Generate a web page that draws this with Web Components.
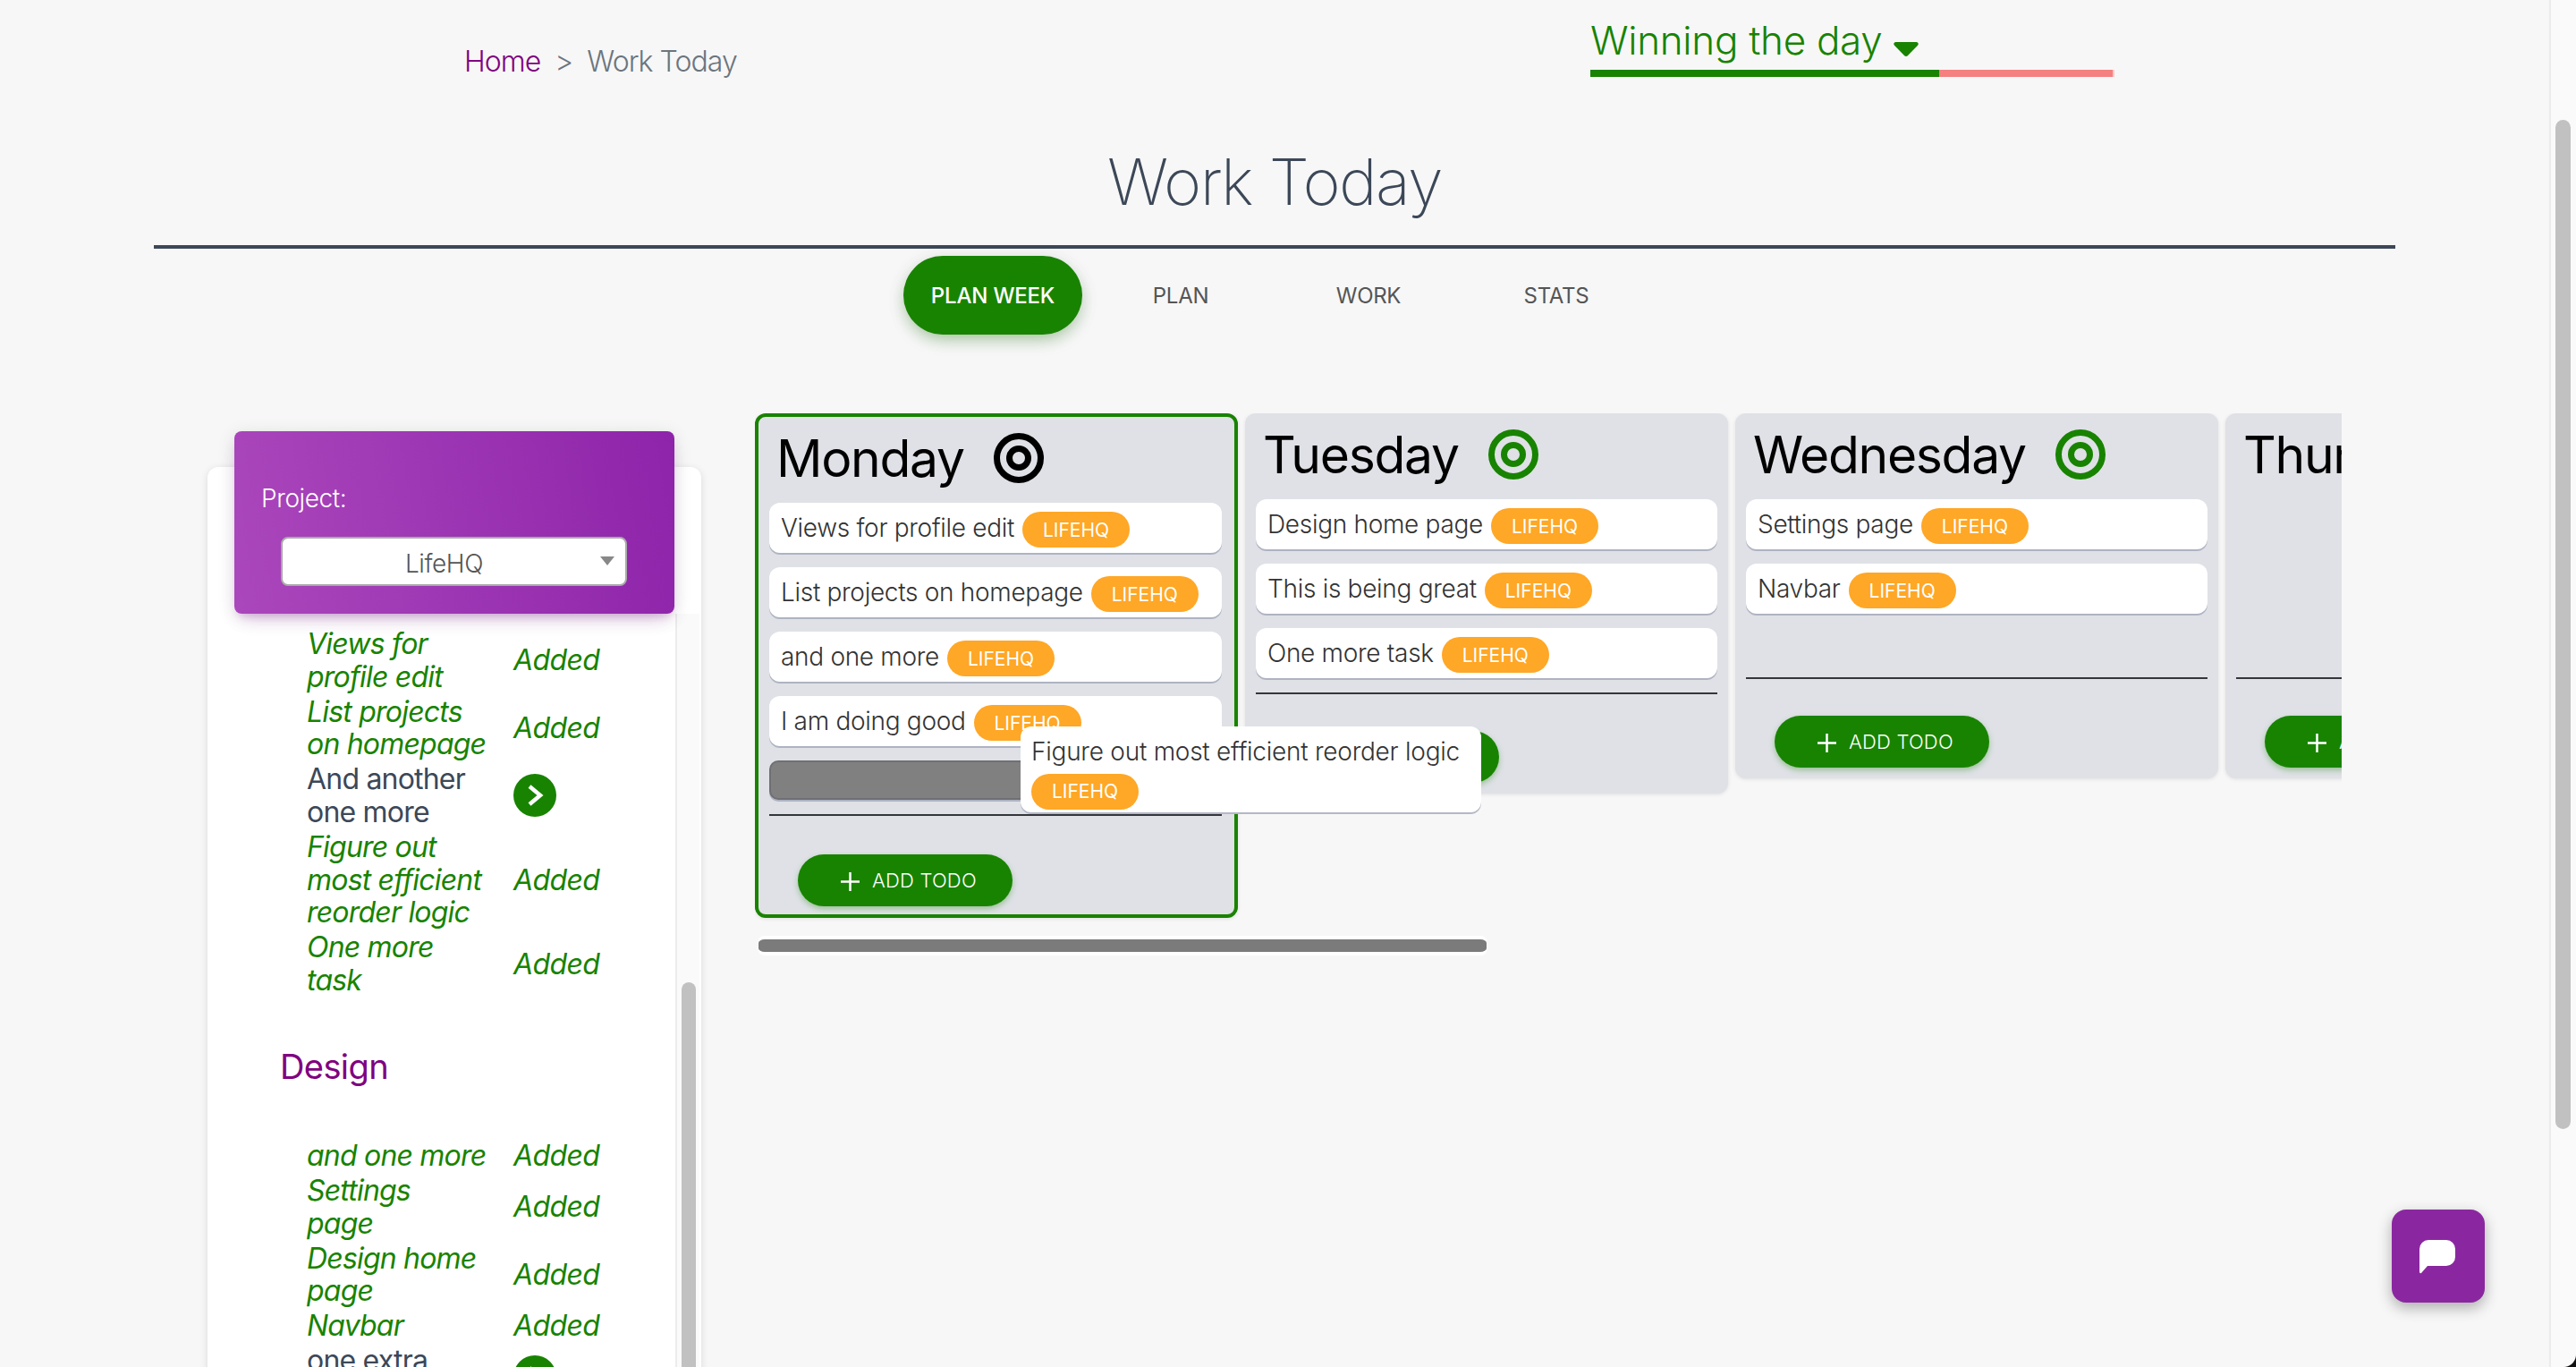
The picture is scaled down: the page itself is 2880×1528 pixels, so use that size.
<!DOCTYPE html>
<html>
<head>
<meta charset="utf-8">
<title>Work Today</title>
<style>
  html, body { margin: 0; padding: 0; height: 100%; overflow: hidden; background: #f7f7f7; }
  body { font-family: Inter, "Noto Sans", sans-serif; font-weight: 300; color: #3c4858; }
</style>
</head>
<body>
<lifehq-app>
  <top-bar>
    <a slot="crumb">Home</a>
    <span slot="crumb" class="sep">&gt;</span>
    <span slot="crumb" class="cur">Work Today</span>
  </top-bar>
  <page-title>Work Today</page-title>
  <tab-bar>
    <tab-item active>Plan Week</tab-item>
    <tab-item>Plan</tab-item>
    <tab-item>Work</tab-item>
    <tab-item>Stats</tab-item>
  </tab-bar>
  <content-row>
    <project-panel slot="side">
      <task-row status="added">Views for<br>profile edit</task-row>
      <task-row status="added">List projects<br>on homepage</task-row>
      <task-row>And another<br>one more</task-row>
      <task-row status="added">Figure out<br>most efficient<br>reorder logic</task-row>
      <task-row status="added">One more<br>task</task-row>
      <section-title>Design</section-title>
      <task-row status="added">and one more</task-row>
      <task-row status="added">Settings<br>page</task-row>
      <task-row status="added">Design home<br>page</task-row>
      <task-row status="added">Navbar</task-row>
      <task-row tall>one extra</task-row>
    </project-panel>
    <week-board slot="main">
      <day-column name="Monday" active>
        <todo-card>Views for profile edit</todo-card>
        <todo-card>List projects on homepage</todo-card>
        <todo-card>and one more</todo-card>
        <todo-card>I am doing good</todo-card>
        <drop-slot></drop-slot>
      </day-column>
      <day-column name="Tuesday" done>
        <todo-card>Design home page</todo-card>
        <todo-card>This is being great</todo-card>
        <todo-card>One more task</todo-card>
      </day-column>
      <day-column name="Wednesday" done>
        <todo-card>Settings page</todo-card>
        <todo-card>Navbar</todo-card>
      </day-column>
      <day-column name="Thursday" done></day-column>
      <drag-card slot="overlay">Figure out most efficient reorder logic</drag-card>
    </week-board>
  </content-row>
  <chat-button slot="float"></chat-button>
</lifehq-app>

<script>
const GREEN = '#188300'

const targetIcon = color => `
  <svg width="56" height="56" viewBox="0 0 56 56" fill="none" stroke="${color}" stroke-width="7">
    <circle cx="28" cy="28" r="24.5"/>
    <circle cx="28" cy="28" r="10.5"/>
  </svg>`

class LifehqApp extends HTMLElement {
  constructor() {
    super()
    this.attachShadow({ mode: 'open' })
    this.shadowRoot.innerHTML = `
      <style>
        :host { display: flex; position: relative; width: 2880px; height: 1528px; overflow: hidden; }
        main { width: 2850px; flex: none; display: flex; flex-direction: column; }
        .track { flex: 1; border-left: 2px solid #ececec; background: #fafafa; padding: 134px 6px 0 5px; }
        .thumb { height: 1128px; background: #c1c1c1; border-radius: 9px; }
        .float { position: absolute; right: 102px; bottom: 72px; }
        .corner { position: absolute; right: 0; bottom: 0; width: 14px; height: 14px; background: radial-gradient(circle at 0 0, transparent 13.5px, #111 14.5px); }
      </style>
      <main><slot></slot></main>
      <div class="track"><div class="thumb"></div></div>
      <div class="float"><slot name="float"></slot></div>
      <div class="corner"></div>
    `
  }
}

class TopBar extends HTMLElement {
  constructor() {
    super()
    this.attachShadow({ mode: 'open' })
    this.shadowRoot.innerHTML = `
      <style>
        :host { display: flex; height: 86px; padding-left: 519px; flex: none; }
        .crumbs { width: 1259px; padding-top: 45px; height: 48px; line-height: 48px; font-size: 32px; letter-spacing: -.95px; display: flex; gap: 16px; }
        ::slotted(a) { color: #800080; }
        ::slotted(.sep) { color: #6c757d; }
        ::slotted(.cur) { color: #6c757d; }
        .win { width: 586px; padding-top: 16px; }
        .label { font-size: 44px; letter-spacing: -.3px; line-height: 58px; height: 62px; color: ${GREEN}; display: flex; }
        .label svg { margin: 31px 0 0 13px; }
        .bar { display: flex; height: 8px; }
        .bar i { display: block; }
      </style>
      <div class="crumbs"><slot name="crumb"></slot></div>
      <div class="win">
        <div class="label">Winning the day
          <svg width="28" height="16" viewBox="0 0 28 16"><path d="M2.500 0H25.500C27.500 0 28.500 2.200 27 3.800L15.800 15.200C14.800 16.200 13.200 16.200 12.200 15.200L1 3.800C-.5 2.200 .5 0 2.500 0Z" fill="${GREEN}"/></svg>
        </div>
        <div class="bar">
          <i style="width:390px;background:${GREEN}"></i>
          <i style="width:194px;background:#f48080"></i>
          <i style="width:2px;background:#f9c9c9"></i>
        </div>
      </div>
    `
  }
}

class PageTitle extends HTMLElement {
  constructor() {
    super()
    this.attachShadow({ mode: 'open' })
    this.shadowRoot.innerHTML = `
      <style>
        :host { display: block; margin: 74px 172px 0; padding-bottom: 28px; font-size: 72px; letter-spacing: -1.6px; line-height: 86px; text-align: center; color: #3c4858; font-weight: 200; flex: none; border-bottom: 4px solid #3c4858; }
      </style>
      <slot></slot>
    `
  }
}

class TabBar extends HTMLElement {
  constructor() {
    super()
    this.attachShadow({ mode: 'open' })
    this.shadowRoot.innerHTML = `
      <style>
        :host { display: flex; justify-content: center; gap: 10px; margin-top: 8px; flex: none; }
      </style>
      <slot></slot>
    `
  }
}

class TabItem extends HTMLElement {
  constructor() {
    super()
    this.attachShadow({ mode: 'open' })
    this.shadowRoot.innerHTML = `
      <style>
        :host { display: flex; width: 200px; height: 88px; align-items: center; justify-content: center; border-radius: 44px; font-size: 24px; font-weight: 400; letter-spacing: -.3px; text-transform: uppercase; color: #555; }
        :host([active]) { background: ${GREEN}; color: #fff; box-shadow: 0 8px 20px -6px rgba(24,131,0,.4), 0 4px 20px rgba(0,0,0,.1); font-weight: 500; letter-spacing: -.2px; }
      </style>
      <slot></slot>
    `
  }
}

class ContentRow extends HTMLElement {
  constructor() {
    super()
    this.attachShadow({ mode: 'open' })
    this.shadowRoot.innerHTML = `
      <style>
        :host { display: flex; align-items: flex-start; padding-left: 232px; margin-top: 88px; gap: 60px; }
      </style>
      <slot name="side"></slot>
      <slot name="main"></slot>
    `
  }
}

class ProjectPanel extends HTMLElement {
  constructor() {
    super()
    this.attachShadow({ mode: 'open' })
    this.shadowRoot.innerHTML = `
      <style>
        :host { display: block; width: 552px; flex: none; margin-top: 60px; background: #fff; border-radius: 12px 12px 0 0; box-shadow: 0 2px 8px rgba(0,0,0,.12); }
        .head { position: relative; z-index: 1; margin: -40px 30px 0; height: 204px; box-sizing: border-box; border-radius: 8px; padding: 53px 30px 0 30px; color: #fff; font-size: 28px; letter-spacing: -.4px; line-height: 44px; background: linear-gradient(80deg, #ab47bc, #8e24aa); box-shadow: 0 12px 20px -10px rgba(156,39,176,.28), 0 4px 20px rgba(0,0,0,.12), 0 7px 8px -5px rgba(156,39,176,.2); }
        .select { box-sizing: border-box; position: relative; margin: 21px 23px 0 22px; height: 55px; background: #fff; border: 2px solid #aaa; border-radius: 8px; color: #555; text-align: center; line-height: 57px; padding-right: 22px; }
        .select i { position: absolute; right: 12px; top: 20px; border: 8px solid transparent; border-top: 10px solid #888; border-bottom: 0; }
        .body { display: flex; }
        .list { width: 523px; flex: none; padding-top: 15px; box-sizing: border-box; height: 900px; overflow: hidden; }
        .track { width: 27px; box-sizing: border-box; border-left: 2px solid #ececec; background: #fafafa; padding: 412px 4px 0 5px; }
        .thumb { height: 600px; background: #c1c1c1; border-radius: 8px; }
      </style>
      <div class="head">Project:
        <div class="select">LifeHQ<i></i></div>
      </div>
      <div class="body">
        <div class="list"><slot></slot></div>
        <div class="track"><div class="thumb"></div></div>
      </div>
    `
  }
}

class TaskRow extends HTMLElement {
  constructor() {
    super()
    this.attachShadow({ mode: 'open' })
  }
  connectedCallback() {
    const end = this.getAttribute('status') === 'added'
      ? '<span class="added">Added</span>'
      : `<svg width="48" height="48" viewBox="0 0 48 48"><circle cx="24" cy="24" r="24" fill="${GREEN}"/><path d="M18 14l12 10-12 10" fill="none" stroke="#fff" stroke-width="4.500"/></svg>`
    this.shadowRoot.innerHTML = `
      <style>
        :host { display: grid; grid-template-columns: 231px 1fr; align-items: center; padding: 1px 0 1px 111px; font-size: 32px; line-height: 36.8px; color: #3c4858; font-weight: 400; }
        :host([status]) { color: ${GREEN}; font-style: italic; }
        :host([tall]) { min-height: 73.600px; }
        :host([tall]) .text { align-self: start; }
        .text { display: block; white-space: nowrap; letter-spacing: -.8px; }
        .added { letter-spacing: -.6px; }
        svg { display: block; margin-top: -2px; }
      </style>
      <span class="text"><slot></slot></span>${end}
    `
  }
}

class SectionTitle extends HTMLElement {
  constructor() {
    super()
    this.attachShadow({ mode: 'open' })
    this.shadowRoot.innerHTML = `
      <style>
        :host { display: block; padding-left: 81px; margin: 56px 0 60px; font-size: 38px; letter-spacing: -.6px; line-height: 41.400px; color: #800080; font-weight: 400; }
      </style>
      <slot></slot>
    `
  }
}

class WeekBoard extends HTMLElement {
  constructor() {
    super()
    this.attachShadow({ mode: 'open' })
    this.shadowRoot.innerHTML = `
      <style>
        :host { display: block; position: relative; width: 1774px; flex: none; }
        .cols { display: flex; gap: 8px; align-items: flex-start; overflow: hidden; height: 584px; }
        .thumb { margin-left: 3px; width: 816px; height: 22px; box-sizing: border-box; border: solid #fff; border-width: 4px 1px; background: #7b7b7b; border-radius: 8px; }
        .overlay { position: absolute; left: 297px; top: 350px; z-index: 2; }
      </style>
      <div class="cols"><slot></slot></div>
      <div class="thumb"></div>
      <div class="overlay"><slot name="overlay"></slot></div>
    `
  }
}

class DayColumn extends HTMLElement {
  constructor() {
    super()
    this.attachShadow({ mode: 'open' })
  }
  connectedCallback() {
    const active = this.hasAttribute('active')
    this.shadowRoot.innerHTML = `
      <style>
        :host { display: block; box-sizing: border-box; width: 540px; flex: none; background: #dfe1e6; border-radius: 12px; padding: 0 12px 12px; box-shadow: 0 1px 4px rgba(0,0,0,.1); }
        :host([active]) { border: 4px solid ${GREEN}; padding: 0 14px 9px 12px; }
        :host([active]) .add { margin-top: 43px; }
        h2 { margin: 0; height: 96px; box-sizing: border-box; padding: 0 0 4px 8px; display: flex; align-items: center; gap: 33px; font-size: 57px; letter-spacing: -1.3px; font-weight: 400; color: #000; }
        svg { display: block; }
        .list { min-height: 199px; border-bottom: 2px solid #33363b; }
        .add { margin: 41px 0 0 32px; }
      </style>
      <h2>${this.getAttribute('name')}${targetIcon(active ? '#000' : GREEN)}</h2>
      <div class="list"><slot></slot></div>
      <div class="add"><add-button>Add Todo</add-button></div>
    `
  }
}

class TagPill extends HTMLElement {
  constructor() {
    super()
    this.attachShadow({ mode: 'open' })
    this.shadowRoot.innerHTML = `
      <style>
        :host { display: inline-flex; width: 120px; height: 40px; align-items: center; justify-content: center; border-radius: 20px; background: #ffa726; color: #fff; font-size: 21px; font-weight: 400; letter-spacing: 0; flex: none; }
      </style>
      <slot></slot>
    `
  }
}

class TodoCard extends HTMLElement {
  constructor() {
    super()
    this.attachShadow({ mode: 'open' })
    this.shadowRoot.innerHTML = `
      <style>
        :host { display: flex; align-items: center; gap: 9px; height: 56px; box-sizing: border-box; padding-left: 13px; margin-bottom: 16px; background: #fff; border-radius: 12px; box-shadow: 0 2px 0 #aeb3c2; font-size: 28px; letter-spacing: -.3px; color: #333; }
        tag-pill { margin-top: 4px; }
      </style>
      <span><slot></slot></span><tag-pill>LIFEHQ</tag-pill>
    `
  }
}

class DropSlot extends HTMLElement {
  constructor() {
    super()
    this.attachShadow({ mode: 'open' })
    this.shadowRoot.innerHTML = `
      <style>
        :host { display: block; box-sizing: border-box; height: 44px; margin-bottom: 16px; background: #808080; border: 2px solid #6f6f74; border-radius: 10px; box-shadow: 0 2px 0 #aeb3c2; }
      </style>
    `
  }
}

class DragCard extends HTMLElement {
  constructor() {
    super()
    this.attachShadow({ mode: 'open' })
    this.shadowRoot.innerHTML = `
      <style>
        :host { display: block; box-sizing: border-box; width: 515px; height: 96px; padding: 8px 12px 0; background: #fff; border-radius: 12px; box-shadow: 0 2px 0 #b4b8c6; font-size: 28px; letter-spacing: -.25px; line-height: 40px; color: #333; }
        tag-pill { display: flex; margin-top: 5px; }
      </style>
      <slot></slot>
      <tag-pill>LIFEHQ</tag-pill>
    `
  }
}

class AddButton extends HTMLElement {
  constructor() {
    super()
    this.attachShadow({ mode: 'open' })
    this.shadowRoot.innerHTML = `
      <style>
        :host { display: flex; width: 240px; height: 58px; box-sizing: border-box; padding-left: 48px; align-items: center; gap: 14px; border-radius: 29px; background: ${GREEN}; color: #fff; font-size: 22px; letter-spacing: .2px; font-weight: 300; text-transform: uppercase; box-shadow: 0 3px 6px rgba(24,131,0,.35); white-space: nowrap; }
        svg { display: block; margin-top: 3px; }
      </style>
      <svg width="21" height="21" viewBox="0 0 21 21"><path d="M10.500 0v21M0 10.500h21" stroke="#fff" stroke-width="2.500"/></svg>
      <span><slot></slot></span>
    `
  }
}

class ChatButton extends HTMLElement {
  constructor() {
    super()
    this.attachShadow({ mode: 'open' })
    this.shadowRoot.innerHTML = `
      <style>
        :host { display: flex; width: 104px; height: 104px; align-items: center; justify-content: center; border-radius: 16px; background: #8a27a0; box-shadow: 0 6px 16px rgba(0,0,0,.3); }
        svg { display: block; margin: 2px 0 0 -2px; }
      </style>
      <svg width="40" height="38" viewBox="0 0 40 38"><path d="M10 0H30A10 10 0 0 1 40 10V19A10 10 0 0 1 30 29H9L2 37Q0 38 0 35V10A10 10 0 0 1 10 0Z" fill="#fff"/></svg>
    `
  }
}

customElements.define('lifehq-app', LifehqApp)
customElements.define('top-bar', TopBar)
customElements.define('page-title', PageTitle)
customElements.define('tab-bar', TabBar)
customElements.define('tab-item', TabItem)
customElements.define('content-row', ContentRow)
customElements.define('project-panel', ProjectPanel)
customElements.define('task-row', TaskRow)
customElements.define('section-title', SectionTitle)
customElements.define('week-board', WeekBoard)
customElements.define('day-column', DayColumn)
customElements.define('tag-pill', TagPill)
customElements.define('todo-card', TodoCard)
customElements.define('drop-slot', DropSlot)
customElements.define('drag-card', DragCard)
customElements.define('add-button', AddButton)
customElements.define('chat-button', ChatButton)
</script>
</body>
</html>
